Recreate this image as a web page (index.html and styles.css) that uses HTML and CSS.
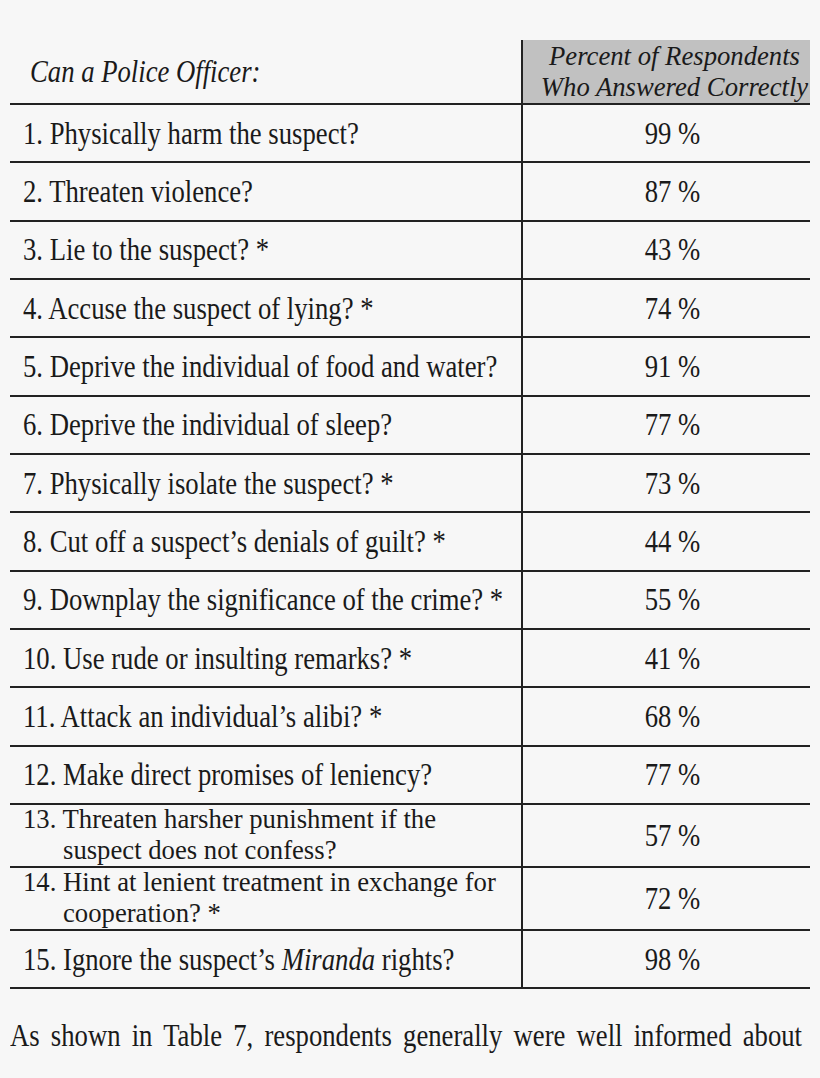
FILE: index.html
```html
<!DOCTYPE html>
<html>
<head>
<meta charset="utf-8">
<link rel="stylesheet" href="styles.css">
</head>
<body>
<div class="page">
  <div class="survey">
    <div class="cell q-head"><span class="tx">Can a Police Officer:</span></div>
    <div class="cell p-head"><span class="tx multi">Percent of Respondents<br>Who Answered Correctly</span></div>

    <div class="cell q"><span class="tx">1. Physically harm the suspect?</span></div><div class="cell p"><span class="tx">99 %</span></div>
    <div class="cell q"><span class="tx">2. Threaten violence?</span></div><div class="cell p"><span class="tx">87 %</span></div>
    <div class="cell q"><span class="tx">3. Lie to the suspect? *</span></div><div class="cell p"><span class="tx">43 %</span></div>
    <div class="cell q"><span class="tx">4. Accuse the suspect of lying? *</span></div><div class="cell p"><span class="tx">74 %</span></div>
    <div class="cell q"><span class="tx">5. Deprive the individual of food and water?</span></div><div class="cell p"><span class="tx">91 %</span></div>
    <div class="cell q"><span class="tx">6. Deprive the individual of sleep?</span></div><div class="cell p"><span class="tx">77 %</span></div>
    <div class="cell q"><span class="tx">7. Physically isolate the suspect? *</span></div><div class="cell p"><span class="tx">73 %</span></div>
    <div class="cell q"><span class="tx">8. Cut off a suspect’s denials of guilt? *</span></div><div class="cell p"><span class="tx">44 %</span></div>
    <div class="cell q"><span class="tx">9. Downplay the significance of the crime? *</span></div><div class="cell p"><span class="tx">55 %</span></div>
    <div class="cell q"><span class="tx">10. Use rude or insulting remarks? *</span></div><div class="cell p"><span class="tx">41 %</span></div>
    <div class="cell q"><span class="tx">11. Attack an individual’s alibi? *</span></div><div class="cell p"><span class="tx">68 %</span></div>
    <div class="cell q"><span class="tx">12. Make direct promises of leniency?</span></div><div class="cell p"><span class="tx">77 %</span></div>
    <div class="cell q"><span class="tx multi hang">13. Threaten harsher punishment if the<br>suspect does not confess?</span></div><div class="cell p"><span class="tx">57 %</span></div>
    <div class="cell q"><span class="tx multi hang">14. Hint at lenient treatment in exchange for<br>cooperation? *</span></div><div class="cell p"><span class="tx">72 %</span></div>
    <div class="cell q"><span class="tx">15. Ignore the suspect’s <i>Miranda</i> rights?</span></div><div class="cell p"><span class="tx">98 %</span></div>
  </div>
  <p class="body-text">As shown in Table 7, respondents generally were well informed about</p>
</div>
</body>
</html>
```

FILE: styles.css
```css
html, body {
  margin: 0;
  padding: 0;
  background: #f7f7f7;
}
.page {
  width: 820px;
  height: 1078px;
  overflow: hidden;
  padding: 40px 10px 0 10px;
  box-sizing: border-box;
  font-family: "Liberation Serif", serif;
  color: #1a1a1a;
}
.survey {
  display: grid;
  width: 800px;
  grid-template-columns: 513px 287px;
  grid-template-rows: 65px repeat(12, 58.33px) 63px 63px 58px;
  font-size: 26.7px;
  line-height: 1;
}
.cell {
  display: flex;
  align-items: center;
  box-sizing: border-box;
  border-bottom: 2px solid #222;
  min-width: 0;
}
.tx {
  display: inline-block;
  white-space: nowrap;
  transform: scaleY(1.18);
}
.tx.multi {
  transform: none;
}
.q-head {
  border-right: 2px solid #222;
  padding-left: 20px;
  font-style: italic;
}
.p-head {
  background: #c1c1c1;
  justify-content: center;
  padding-left: 16px;
  font-style: italic;
  text-align: center;
  line-height: 30.5px;
  overflow: visible;
}
.q {
  border-right: 2px solid #222;
  padding-left: 13px;
}
.hang {
  padding-left: 40px;
  text-indent: -40px;
  line-height: 31.5px;
}
.p {
  justify-content: center;
  padding-left: 12px;
}
.body-text {
  margin: 33px 0 0 0;
  width: 792px;
  font-size: 26.7px;
  line-height: 1;
  text-align: justify;
  text-align-last: justify;
  transform: scaleY(1.18);
}
```
